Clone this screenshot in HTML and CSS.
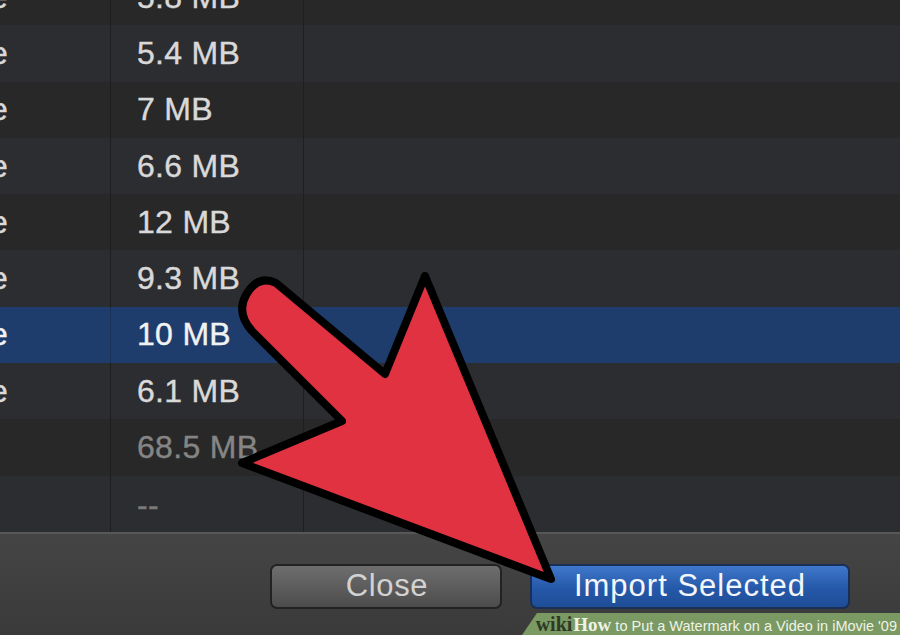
FILE: index.html
```html
<!DOCTYPE html>
<html>
<head>
<meta charset="utf-8">
<link rel="stylesheet" href="styles.css">
</head>
<body>
<div class="screen">
  <div class="list">
    <div class="row"><div class="c1"><span class="tail">e</span></div><div class="c2">5.8 MB</div><div class="c3"></div></div>
    <div class="row alt"><div class="c1"><span class="tail">e</span></div><div class="c2">5.4 MB</div><div class="c3"></div></div>
    <div class="row"><div class="c1"><span class="tail">e</span></div><div class="c2">7 MB</div><div class="c3"></div></div>
    <div class="row alt"><div class="c1"><span class="tail">e</span></div><div class="c2">6.6 MB</div><div class="c3"></div></div>
    <div class="row"><div class="c1"><span class="tail">e</span></div><div class="c2">12 MB</div><div class="c3"></div></div>
    <div class="row alt"><div class="c1"><span class="tail">e</span></div><div class="c2">9.3 MB</div><div class="c3"></div></div>
    <div class="row sel"><div class="c1"><span class="tail">e</span></div><div class="c2">10 MB</div><div class="c3"></div></div>
    <div class="row alt"><div class="c1"><span class="tail">e</span></div><div class="c2">6.1 MB</div><div class="c3"></div></div>
    <div class="row"><div class="c1"></div><div class="c2 dim">68.5 MB</div><div class="c3"></div></div>
    <div class="row alt"><div class="c1"></div><div class="c2 dim dash">--</div><div class="c3"></div></div>
  </div>
  <div class="panel">
    <div class="btn close">Close</div>
    <div class="btn import">Import Selected</div>
  </div>
  <svg class="arrow" width="900" height="635" viewBox="0 0 900 635">
    <path d="M 276 283 L 385 374 L 425 276 L 551 579 L 242 463 L 342 421 L 252 331 Q 236 313 246 295 Q 258 274 276 283 Z" fill="#e13241" stroke="#000" stroke-width="8" stroke-linejoin="round"/>
  </svg>
  <div class="banner"><span class="wiki">wiki</span><span class="how">How</span> to Put a Watermark on a Video in iMovie '09</div>
</div>
</body>
</html>
```
FILE: styles.css
```css
html, body { margin: 0; padding: 0; background: #282828; }
.screen {
  position: relative;
  width: 900px;
  height: 635px;
  overflow: hidden;
  display: flex;
  flex-direction: column;
  background: #282828;
  font-family: "Liberation Sans", Arial, sans-serif;
}
.list {
  margin-top: -31px;
  display: flex;
  flex-direction: column;
}
.row {
  height: 56.3px;
  display: flex;
  align-items: stretch;
  background: #282828;
}
.row.alt { background: #2c2d30; }
.row.sel { background: #1f3d6c; }
.c1 {
  width: 110px;
  border-right: 1px solid #1e1e1e;
  overflow: hidden;
  display: flex;
  align-items: center;
  font-size: 32px;
  color: #d9d9d9;
  -webkit-text-stroke: 0.4px #d9d9d9;
}
.tail { margin-left: -10px; }
.c2 {
  width: 166px;
  padding-left: 26px;
  border-right: 1px solid #1f1f1f;
  display: flex;
  align-items: center;
  font-size: 32px;
  letter-spacing: 0.3px;
  color: #d9d9d9;
  -webkit-text-stroke: 0.4px #d9d9d9;
  white-space: nowrap;
}
.row.sel .c1, .row.sel .c2 { color: #f2f2f2; -webkit-text-stroke-color: #f2f2f2; border-right-color: #1b3258; }
.c2.dim { color: #858585; -webkit-text-stroke-color: #858585; }
.c2.dash { padding-top: 4px; color: #7a7a7a; -webkit-text-stroke-color: #7a7a7a; }
.c3 { flex: 1; }
.panel {
  flex: 1;
  border-top: 2px solid #575757;
  background: linear-gradient(#454545, #3a3a3a);
  display: flex;
  align-items: flex-start;
  padding-top: 30px;
  padding-left: 270px;
  gap: 28px;
}
.btn {
  height: 45px;
  border-radius: 7px;
  display: flex;
  align-items: center;
  justify-content: center;
  font-size: 31px;
  box-sizing: border-box;
}
.close {
  width: 232px;
  border: 2px solid #222;
  background: linear-gradient(#6e6e6e, #4c4c4c);
  color: #d2d2d2;
  letter-spacing: 0.6px;
  padding-left: 2px;
}
.import {
  width: 320px;
  border: 2px solid #1a2f55;
  background: linear-gradient(#3f78cc, #2558a8 55%, #1f4d97);
  color: #f4f6fa;
  letter-spacing: 1px;
}
.arrow {
  position: absolute;
  left: 0;
  top: 0;
  pointer-events: none;
}
.banner {
  position: absolute;
  right: 0;
  bottom: 0;
  width: 378px;
  height: 22px;
  background: #7b9962;
  clip-path: polygon(15px 0, 100% 0, 100% 100%, 0 100%);
  color: #eef3e8;
  font-size: 14.5px;
  line-height: 22px;
  text-align: right;
  padding-right: 3px;
  box-sizing: border-box;
  white-space: nowrap;
}
.wiki { font-family: "Liberation Serif", serif; font-weight: bold; font-size: 20px; color: #2e3a26; }
.how { font-family: "Liberation Serif", serif; font-weight: bold; font-size: 19px; color: #eef3e8; margin-left: 1px; }
```
